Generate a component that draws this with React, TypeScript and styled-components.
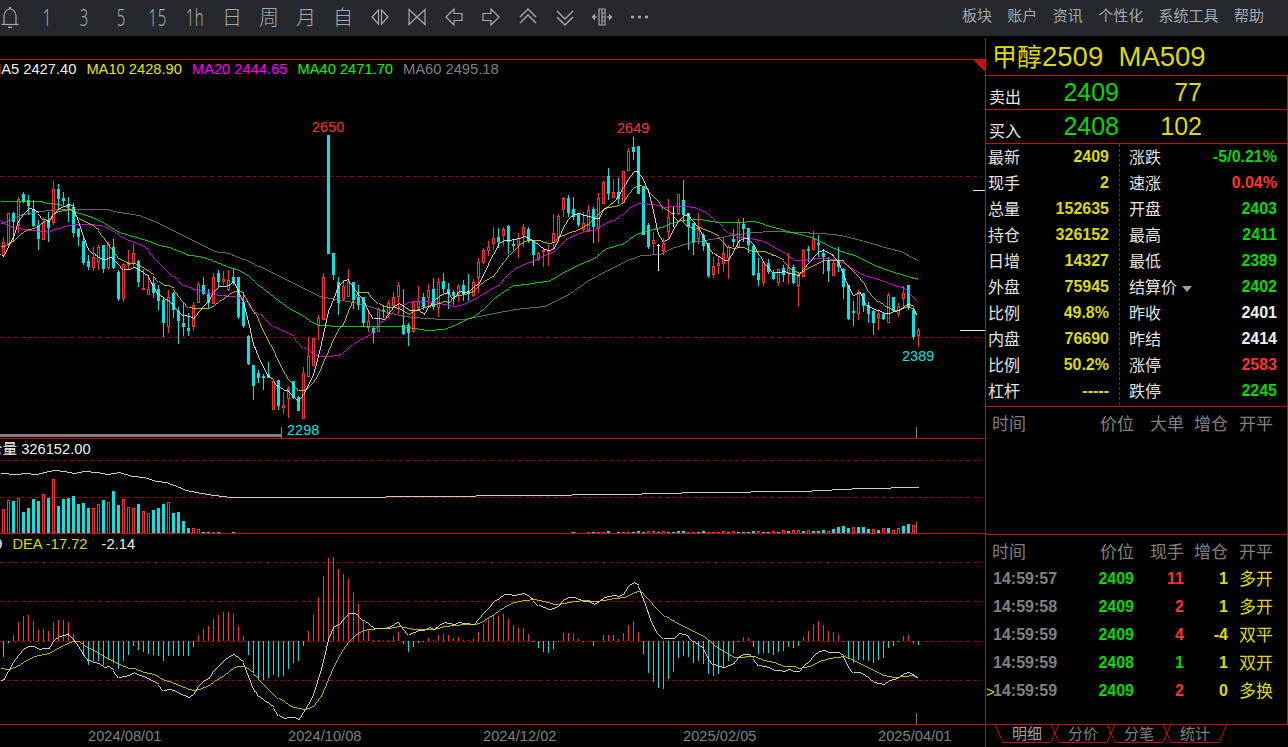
import React from 'react';
import styled, { createGlobalStyle } from 'styled-components';

type P = [number, number];
const FONT = `"Liberation Sans", "Noto Sans CJK SC", sans-serif`;
const RED = '#ff3232', CYAN = '#00e6e6', YEL = '#dcdc00', GRN = '#00dc00', LINE = '#c80f0f', GRAY = '#808080';

const G = createGlobalStyle`
  html, body { margin: 0; padding: 0; background: #000; }
  * { box-sizing: border-box; }
`;
const Page = styled.div`width:1288px;height:747px;overflow:hidden;background:#000;font-family:${FONT};display:flex;flex-direction:column;`;
const Header = styled.header`height:36px;flex:none;background:#25282d;display:flex;align-items:center;justify-content:space-between;padding-right:24px;overflow:hidden;`;
const Tools = styled.div`display:flex;margin-left:-8.5px;`;
const Tool = styled.div`width:37px;height:36px;padding-bottom:2px;display:flex;align-items:center;justify-content:center;color:#a8a8a8;font-family:"Noto Sans CJK SC","Noto Sans",sans-serif;font-weight:300;font-size:20px;line-height:1;svg{display:block;}`;
const Digit = styled.span`display:block;font-family:"Noto Sans",sans-serif;font-weight:300;font-size:24px;letter-spacing:1px;transform:scaleX(.62);white-space:nowrap;`;
const Menu = styled.nav`display:flex;gap:15.4px;color:#a3a8ad;font-size:15px;padding-bottom:7px;`;
const Body = styled.div`flex:1;display:flex;min-height:0;`;
const Charts = styled.main`width:985px;flex:none;display:flex;flex-direction:column;`;
const TopGap = styled.div`height:24px;border-bottom:1px solid ${LINE};flex:none;`;
const Panel = styled.section<{ $h: number }>`position:relative;height:${p => p.$h}px;flex:none;border-bottom:1px solid ${LINE};overflow:hidden;`;
const Plot = styled.svg`position:absolute;left:0;top:0;display:block;shape-rendering:crispEdges;polyline{fill:none;stroke-width:.8;}`;
const Legend = styled.div<{ $ml: number; $mt?: number }>`position:relative;display:flex;gap:10px;margin-left:${p => p.$ml}px;margin-top:${p => p.$mt ?? 0}px;font-size:14.7px;height:18px;line-height:18px;white-space:nowrap;`;
const Item = styled.span<{ $c: string }>`color:${p => p.$c};`;
const Peak = styled.span<{ $x: number; $y: number; $c: string }>`position:absolute;left:${p => p.$x}px;top:${p => p.$y}px;color:${p => p.$c};font-size:14.5px;line-height:16px;`;
const Axis = styled.div`flex:1;display:flex;align-items:center;color:${GRAY};font-size:14.7px;padding-bottom:1px;`;
const DateLabel = styled.span<{ $ml: number }>`margin-left:${p => p.$ml}px;width:76px;white-space:nowrap;`;
const Side = styled.aside`flex:1;margin-top:2px;border-left:1px solid ${LINE};display:flex;flex-direction:column;`;
const Title = styled.div`height:37px;flex:none;color:${YEL};font-size:27.5px;line-height:38px;padding-left:6px;white-space:pre;`;
const TitleCn = styled.span`font-size:25px;`;
const Boxed = styled.div`border-right:1px solid ${LINE};border-bottom:1px solid ${LINE};flex:none;`;
const QuoteRow = styled(Boxed)<{ $first?: boolean }>`height:${p => p.$first ? 35 : 34}px;border-top:${p => p.$first ? `1px solid ${LINE}` : 'none'};display:grid;grid-template-columns:77px 56px 83px;align-items:center;`;
const QLabel = styled.span`color:#e8e8e8;font-size:16px;padding:6px 0 0 3px;`;
const QPrice = styled.span`color:${GRN};font-size:25px;text-align:right;`;
const QVol = styled.span`color:${YEL};font-size:25px;text-align:right;`;
const Quotes = styled(Boxed)`height:263px;display:grid;grid-template-columns:134px 1fr;`;
const QCol = styled.div<{ $right?: boolean }>`padding:0 10px 0 ${p => p.$right ? 9 : 2}px;border-right:${p => p.$right ? 'none' : `1px dashed ${LINE}`};height:261px;`;
const QItem = styled.div`height:26px;display:flex;justify-content:space-between;align-items:center;`;
const QName = styled.span`position:relative;top:-1px;color:#e4e4e4;font-size:16px;white-space:nowrap;`;
const Caret = styled.i`position:absolute;left:100%;margin-left:5px;top:12px;width:0;height:0;border:5.5px solid transparent;border-top:6px solid #a0a0a0;border-bottom:0;`;
const QVal = styled.span<{ $c: string }>`color:${p => p.$c};font-size:16px;font-weight:700;white-space:nowrap;`;
const Ticks = styled(Boxed)<{ $h: number }>`height:${p => p.$h}px;padding:2px 0 0 6px;`;
const TickRow = styled.div<{ $h: number }>`position:relative;height:${p => p.$h}px;display:grid;grid-template-columns:75px 67px 50px 44px 45px;align-items:center;white-space:nowrap;`;
const TH = styled.span<{ $left?: boolean }>`position:relative;top:-1px;color:${GRAY};font-size:17px;text-align:${p => p.$left ? 'left' : 'right'};`;
const TD = styled.span<{ $c: string; $left?: boolean; $normal?: boolean }>`position:relative;top:${p => p.$normal ? -2 : 0}px;color:${p => p.$c};font-size:${p => p.$normal ? 17 : 16}px;font-weight:${p => p.$normal ? 400 : 700};text-align:${p => p.$left ? 'left' : 'right'};padding-left:${p => p.$left ? 1 : 0}px;`;
const Cursor = styled.span`position:absolute;left:-6px;top:50%;transform:translateY(-50%);color:${YEL};font-size:15px;`;
const TabBar = styled.div`flex:1;display:flex;padding-left:13px;`;
const Tab = styled.div<{ $on?: boolean }>`position:relative;width:56px;height:18px;line-height:17px;text-align:center;font-size:15px;color:${p => p.$on ? '#a0a0a0' : GRAY};svg{position:absolute;left:-4px;top:-1px;overflow:visible;}`;

const seg = (ox: number, oy: number, pts: number[][]): P[] => pts.map(([x, y]) => [ox + x / 3, oy + y / 3]);
const mono = (...parts: P[][]): string => {
  let last = -1e9;
  const out: string[] = [];
  parts.flat().forEach(([x, y]) => { if (x > last + 0.01) { out.push(`${Math.floor(x) + .5},${Math.floor(y) + .5}`); last = x; } });
  return out.join(' ');
};

const c5 = [[1,215,255,200,262],[1,130,220,130,230],[0,130,155,125,215],[1,88,162,80,190],[0,72,95,65,100],[0,90,108,75,135],[0,118,168,90,170],[0,165,207,150,240],[1,155,207,140,210],[0,150,175,125,215],[1,58,155,32,165],[0,58,88,42,120],[0,85,92,65,105],[0,103,110,80,155],[0,110,190,100,200],[0,178,202,175,228],[0,212,278,205,285],[0,272,290,255,300],[1,262,290,232,302],[1,232,272,225,300],[0,225,298,225,308],[1,222,290,215,300],[0,232,295,208,298],[0,305,388,300,392],[1,282,385,278,395],[1,275,283,240,298],[1,250,275,222,290],[0,273,335,270,350],[1,355,358,298,360],[1,357,372,315,375],[0,338,368,320,385],[0,358,392,345,420],[0,390,458,385,500],[1,380,468,360,490],[0,370,420,365,445],[0,422,452,410,522],[0,460,470,400,497],[0,475,482,430,498],[1,405,468,395,482],[1,343,397,335,400],[0,345,372,322,375],[0,372,398,358,415],[1,322,400,308,402],[0,308,335,300,350],[1,328,332,302,345],[1,330,358,300,362],[0,322,338,295,345],[0,322,442,320,448],[0,395,468,370,475],[0,497,582,495,585],[0,585,648,585,690],[0,608,625,600,640],[0,618,623,612,660],[0,612,623,575,625],[1,632,718,630,720],[0,630,708,630,720],[1,705,710,665,732],[1,655,685,648,745],[0,633,685,633,688],[0,680,722,678,722],[1,610,745,592,748],[1,558,617,502,620],[1,505,585,503,588],[1,445,465,435,510],[1,322,447,310,450],[0,-105,252,-105,252],[0,250,315,250,330],[0,335,400,322,435]];
const c7 = [[1,527,565,510,570],[1,515,558,478,560],[0,517,570,515,598],[0,560,585,525,600],[0,562,640,560,650],[1,632,652,600,665],[0,655,668,650,698],[1,597,662,595,665],[0,600,605,588,625],[1,580,610,570,625],[1,562,585,545,590],[1,525,558,515,612],[0,645,672,538,675],[0,645,670,640,707],[1,575,662,575,668],[1,572,590,527,600],[0,562,590,550,600],[1,540,562,522,590],[0,538,590,505,600],[1,517,590,505,620],[0,513,537,490,550],[0,538,552,518,598],[0,545,558,540,585],[1,528,548,522,575],[0,525,552,510,572],[0,547,553,492,572],[1,517,555,507,560],[1,457,502,445,550],[1,420,457,415,462],[1,412,420,392,437],[1,385,400,352,420],[0,382,395,355,415],[1,357,375,350,408],[0,348,395,345,432],[0,402,407,388,420],[1,385,403,370,445],[1,352,372,342,412],[0,357,393,350,398],[0,393,435,393,468],[1,430,445,425,452],[1,420,424,415,472],[1,420,424,405,468],[1,370,397,312,420],[1,318,378,312,395],[1,265,298,262,322],[0,265,308,255,322],[0,298,320,262,330],[0,312,345,310,350],[1,338,358,305,365],[1,300,360,285,365],[0,298,350,292,400],[1,265,352,250,395],[1,217,278,213,280],[0,198,252,175,270],[1,247,262,207,265],[0,245,268,205,282],[1,183,275,182,280],[1,123,180,115,182],[0,112,125,82,150],[0,108,252,108,252]];
const c8 = [[0,52,195,52,195],[0,165,232,160,238],[1,210,218,185,252],[2,225,228,222,302],[1,220,240,205,255],[1,142,182,88,205],[2,128,130,110,170],[1,72,130,72,135],[0,90,135,30,150],[0,130,172,128,240],[0,160,215,158,255],[1,180,205,130,222],[0,195,228,190,242],[0,220,317,218,323],[1,288,312,262,325],[1,280,284,258,312],[1,250,278,200,305],[1,232,262,225,327],[0,208,215,178,232],[1,155,228,148,235],[0,162,178,145,215],[0,175,225,175,250],[0,228,315,225,318],[0,310,330,265,347],[1,275,335,272,348],[0,280,305,268,312],[0,308,327,300,330],[1,298,335,296,348],[0,293,315,285,335],[1,290,305,250,342],[0,290,340,285,342],[1,318,345,310,410],[1,240,317,238,320],[0,237,243,228,275],[1,208,238,183,240],[0,220,225,195,262],[0,250,262,238,312],[0,270,303,262,335],[1,278,315,268,317],[0,270,290,230,305],[0,298,350,295,388],[0,345,447,345,450],[0,423,430,392,467],[1,367,430,360,450],[0,370,408,368,425],[0,405,433,395,460],[0,422,458,420,495],[1,432,440,420,480],[0,432,447,425,450],[1,375,455,368,458],[0,382,422,380,425],[1,408,428,398,440],[1,370,385,348,410],[0,345,415,345,420],[0,420,500,415,510],[1,480,494,475,530]];
const candles = [
  ...c5.map(c => [c[0], 170 + c[1] / 3, 170 + c[2] / 3, 170 + c[3] / 3, 170 + c[4] / 3]),
  ...c7.map(c => [c[0], 110 + c[1] / 3, 110 + c[2] / 3, 110 + c[3] / 3, 110 + c[4] / 3]),
  ...c8.map(c => [c[0], 170 + c[1] / 3, 170 + c[2] / 3, 170 + c[3] / 3, 170 + c[4] / 3]),
].map(c => c.map(Math.round));

const ma5 = mono(
  seg(0,170,[[0,250],[10,258],[25,225],[40,200],[55,150],[70,130],[85,115],[100,118],[115,130],[130,148],[145,155],[160,130],[175,115],[190,108],[205,103],[220,110],[235,150],[250,195],[265,235],[280,250],[295,262],[310,270],[325,262],[340,265],[355,280],[370,298],[385,298],[400,293],[415,298],[430,310],[445,318],[460,345],[475,372],[490,385],[505,395],[520,405],[535,420],[550,435],[565,440],[580,445],[595,425],[610,405],[625,390],[640,365],[655,350],[670,350],[685,345],[700,332],[715,360],[730,395],[745,450],[760,520],[775,560],[790,590],[805,620],[820,630],[835,650],[850,660],[865,660],[880,675],[895,690],[910,670],[925,640],[940,610],[955,555],[970,490],[985,420],[1000,385],[1015,345]]),
  seg(340,110,[[10,510],[25,508],[40,530],[55,550],[70,565],[85,600],[100,625],[115,625],[130,628],[145,610],[160,590],[175,580],[190,590],[205,600],[220,602],[235,600],[250,612],[265,590],[280,570],[295,558],[310,550],[325,548],[340,565],[355,545],[370,548],[385,545],[400,530],[415,520],[430,490],[445,460],[460,430],[475,400],[490,390],[505,390],[520,388],[535,385],[550,378],[565,385],[580,395],[595,405],[610,418],[625,420],[640,415],[655,385],[670,350],[685,325],[700,312],[715,310],[730,315],[745,318],[760,325],[775,325],[790,298],[805,285],[820,275],[835,255],[850,230],[865,205],[880,185],[895,183],[910,205],[925,240],[940,300],[955,370]]),
  seg(640,170,[[70,215],[85,205],[100,175],[115,150],[130,135],[145,132],[160,150],[175,170],[190,195],[205,230],[220,250],[235,258],[250,272],[265,272],[280,240],[295,210],[310,205],[325,205],[340,220],[355,250],[370,275],[385,290],[400,308],[415,308],[430,305],[445,310],[460,312],[475,315],[490,295],[505,278],[520,262],[535,245],[550,240],[565,250],[580,255],[595,272],[610,310],[625,345],[640,375],[660,365],[680,405],[700,418],[720,425],[730,430],[745,430],[760,425],[775,420],[790,408],[805,400],[820,412],[833,432]]),
);
const ma10 = mono(
  seg(0,170,[[0,228],[10,230],[25,220],[40,210],[55,195],[70,185],[85,178],[100,175],[115,165],[130,155],[145,148],[160,130],[175,125],[190,122],[205,118],[220,125],[235,145],[250,155],[265,160],[280,170],[295,180],[310,200],[325,220],[340,240],[355,265],[370,275],[385,280],[400,280],[415,285],[430,295],[445,305],[460,315],[475,335],[490,345],[505,345],[520,355],[535,375],[550,395],[565,412],[580,415],[595,415],[610,415],[625,415],[640,405],[655,395],[670,385],[685,372],[700,365],[715,360],[730,370],[745,395],[760,420],[775,445],[790,480],[805,510],[820,535],[835,570],[850,600],[865,625],[880,640],[895,660],[910,660],[925,650],[940,635],[955,610],[970,575],[985,540],[1000,505],[1015,475]]),
  seg(340,110,[[10,640],[25,600],[40,565],[55,548],[70,547],[85,548],[100,565],[115,580],[130,590],[145,592],[160,592],[175,595],[190,605],[205,612],[220,602],[235,597],[250,592],[265,588],[280,582],[295,580],[310,575],[325,578],[340,558],[355,555],[370,552],[385,550],[400,540],[415,525],[430,515],[445,505],[460,495],[475,475],[490,455],[505,435],[520,420],[535,405],[550,395],[565,390],[580,390],[595,392],[610,398],[625,400],[640,398],[655,380],[670,375],[685,368],[700,365],[715,358],[730,350],[745,340],[760,325],[775,310],[790,295],[805,292],[820,290],[835,285],[850,275],[865,250],[880,232],[895,225],[910,228],[925,240],[940,255],[955,270]]),
  seg(640,170,[[70,115],[85,125],[100,135],[115,150],[130,155],[145,170],[160,178],[175,172],[190,178],[205,185],[220,190],[235,198],[250,215],[265,232],[280,235],[295,232],[310,232],[325,240],[340,245],[355,245],[370,245],[385,250],[400,255],[415,262],[430,270],[445,285],[460,300],[475,310],[490,302],[505,292],[520,285],[535,278],[550,272],[565,270],[580,272],[595,270],[610,272],[625,285],[640,302],[655,315],[670,335],[685,360],[700,380],[715,395],[730,405],[745,415],[760,422],[775,420],[790,412],[805,408],[820,420],[833,432]]),
);
const ma20 = mono(
  seg(0,170,[[0,148],[10,160],[25,170],[40,175],[55,175],[70,178],[85,180],[100,182],[115,183],[130,185],[145,187],[160,178],[175,175],[190,170],[205,165],[220,162],[235,163],[265,163],[295,165],[310,170],[325,178],[340,185],[355,195],[370,205],[385,212],[400,218],[415,222],[430,228],[445,240],[460,258],[475,275],[490,290],[505,305],[520,318],[535,330],[550,345],[565,352],[580,357],[595,362],[610,366],[625,370],[640,372],[655,375],[670,375],[685,378],[700,380],[715,385],[730,390],[745,400],[760,420],[775,432],[790,440],[805,455],[820,470],[835,478],[850,485],[865,490],[880,500],[895,518],[910,532],[925,542],[940,552],[955,558],[985,558],[1020,554]]),
  seg(340,110,[[0,730],[25,712],[40,700],[55,690],[70,682],[85,675],[100,660],[115,640],[130,630],[145,615],[160,600],[175,590],[190,582],[205,578],[220,575],[250,575],[280,578],[310,582],[340,588],[355,587],[370,583],[385,575],[400,568],[415,560],[430,550],[445,540],[460,532],[475,525],[490,505],[505,490],[520,478],[535,470],[550,462],[565,457],[580,450],[595,445],[610,437],[625,430],[640,425],[655,410],[670,395],[685,383],[700,375],[715,370],[730,365],[760,360],[775,350],[790,342],[805,335],[820,330],[835,320],[850,310],[865,295],[880,285],[895,280],[940,282],[960,288]]),
  seg(640,170,[[70,112],[100,110],[130,108],[160,112],[175,118],[190,125],[205,135],[220,148],[235,160],[250,172],[265,188],[280,197],[295,203],[325,205],[345,208],[370,215],[385,222],[400,232],[415,240],[430,248],[445,258],[460,270],[475,272],[490,270],[505,268],[520,265],[550,265],[580,268],[610,280],[625,290],[640,302],[655,308],[670,315],[700,325],[730,335],[760,345],[790,355],[805,365],[820,380],[833,392]]),
);
const ma40 = mono(
  seg(0,170,[[0,93],[120,95],[140,100],[175,102],[205,115],[235,130],[265,140],[295,152],[325,170],[355,187],[385,195],[415,205],[445,215],[475,225],[505,232],[535,245],[565,255],[595,260],[625,268],[655,280],[685,292],[715,302],[745,318],[775,345],[805,370],[835,395],[865,415],[895,430],[925,450],[955,465],[1020,468]]),
  seg(340,110,[[0,650],[85,650],[175,650],[220,655],[260,660],[310,657],[340,645],[370,630],[400,620],[430,595],[460,565],[490,545],[520,525],[560,522],[590,518],[620,515],[650,498],[680,480],[710,465],[740,455],[770,440],[800,415],[850,400],[880,375],[910,365],[960,352]]),
  seg(640,170,[[30,175],[60,170],[90,160],[120,150],[175,148],[230,156],[290,157],[340,155],[400,173],[450,187],[490,195],[520,205],[560,225],[600,245],[650,258],[700,285],[750,303],[790,317],[833,328]]),
);
const ma60 = mono(
  seg(0,170,[[0,160],[25,150],[55,135],[85,130],[115,125],[175,118],[235,118],[315,118],[355,128],[415,135],[460,155],[505,175],[550,200],[595,220],[640,243],[685,250],[730,268],[775,290],[820,310],[865,335],[910,355],[955,378],[1020,390]]),
  seg(340,110,[[0,570],[40,578],[85,590],[130,605],[190,618],[250,625],[310,628],[370,628],[430,617],[490,605],[550,595],[610,590],[680,555],[740,515],[800,480],[860,452],[900,437],[955,432]]),
  seg(640,170,[[40,250],[90,235],[150,218],[210,208],[270,197],[330,188],[400,183],[470,187],[540,190],[600,197],[660,210],[720,228],[780,245],[833,270]]),
);
const obv = mono(
  seg(0,430,[[0,130],[50,133],[70,130],[110,132],[130,128],[160,122],[190,125],[220,130],[250,125],[290,126],[320,132],[355,128],[395,138],[430,142],[465,153],[495,156],[520,165],[555,182],[600,190],[640,196],[690,202],[1020,202]]),
  [[520,495.5],[620,494],[700,492.5],[800,491],[860,488],[918,487]],
);
const dif = mono(
  seg(0,430,[[0,750],[10,748],[25,722],[40,695],[55,672],[70,655],[85,648],[100,648],[115,658],[130,655],[145,655],[160,630],[175,620],[190,615],[205,610],[220,625],[235,645],[250,670],[265,690],[280,697],[295,700],[310,712],[325,708],[340,720],[355,742],[370,740],[385,735],[400,727],[415,735],[430,740],[445,748],[460,755],[475,762],[490,780],[505,778],[520,782],[535,790],[550,795],[565,802],[580,790],[595,765],[610,750],[625,745],[640,722],[655,705],[670,690],[685,680],[700,672],[715,685],[730,697],[745,735],[760,775],[775,800],[790,812],[805,820],[820,832],[835,855],[850,865],[865,862],[880,862],[895,868],[910,845],[925,820],[940,790]]),
  seg(320,520,[[0,455],[10,420],[25,355],[40,320],[55,312],[70,295],[85,280],[100,280],[115,285],[130,300],[145,312],[160,325],[190,325],[205,322],[220,312],[235,305],[250,325],[265,343],[280,338],[295,332],[310,332],[325,323],[340,328],[355,315],[370,308],[385,310],[400,313],[415,308],[430,310],[460,312],[475,295],[490,278],[505,262],[520,245],[535,235],[550,223],[565,223],[580,227],[595,224],[610,220],[625,228],[640,240],[655,255],[670,262],[685,268],[700,265],[715,255],[730,238],[745,232],[760,232],[775,238],[790,243],[805,243],[820,252],[835,245],[850,232],[865,230],[880,226],[895,228],[910,220],[925,197],[940,187],[955,197],[970,235]]),
  seg(640,520,[[15,250],[30,295],[50,335],[70,355],[100,355],[115,340],[130,342],[145,350],[160,365],[175,375],[190,385],[205,415],[220,432],[235,438],[250,442],[265,437],[280,430],[295,410],[310,402],[325,402],[340,415],[355,435],[370,438],[385,443],[400,450],[415,452],[430,454],[445,448],[460,453],[475,454],[490,435],[505,425],[520,405],[535,395],[550,392],[565,397],[595,397],[610,410],[625,440],[640,457],[655,457],[670,463],[685,475],[700,488],[715,491],[730,493],[745,482],[760,477],[775,472],[790,460],[805,457],[820,465],[833,475]]),
);
const dea = mono(
  seg(0,430,[[0,715],[25,718],[40,712],[55,705],[70,695],[85,688],[100,680],[115,675],[130,673],[145,670],[160,660],[175,653],[190,645],[205,638],[220,633],[235,635],[250,645],[265,655],[280,662],[295,670],[310,680],[325,688],[340,695],[355,703],[370,710],[385,715],[400,716],[415,722],[430,727],[445,730],[460,733],[475,742],[490,750],[505,755],[520,760],[535,765],[550,772],[565,778],[580,780],[595,778],[610,772],[625,765],[640,755],[655,745],[670,735],[685,725],[700,712],[715,708],[730,708],[745,718],[760,730],[775,745],[790,760],[805,775],[820,790],[835,805],[850,815],[865,825],[880,832],[895,836],[910,838],[925,835],[940,825]]),
  seg(320,520,[[0,528],[10,510],[25,475],[40,440],[55,410],[70,385],[85,365],[100,350],[115,337],[130,332],[145,328],[175,326],[205,324],[235,320],[250,322],[265,325],[280,328],[310,328],[340,327],[370,320],[400,315],[430,313],[460,312],[475,310],[490,302],[505,293],[520,283],[535,272],[550,262],[565,254],[580,248],[595,243],[610,240],[640,238],[670,245],[700,252],[730,250],[760,243],[790,240],[820,244],[850,240],[880,235],[910,232],[925,225],[940,218],[955,214],[970,220]]),
  seg(640,520,[[25,235],[50,262],[75,290],[100,305],[130,318],[160,335],[190,350],[220,375],[250,395],[280,412],[340,408],[370,420],[400,428],[430,438],[460,440],[475,445],[505,438],[535,423],[565,415],[610,408],[640,422],[670,435],[700,452],[730,465],[760,472],[790,468],[815,465],[833,472]]),
);
const hist = [-16,-2,6,19,25,26,20,11,12,10,19,21,21,19,7,0,-15,-24,-20,-20,-24,-19,-22,-28,-20,-14,-5,-9,-11,-13,-14,-15,-20,-15,-15,-15,-15,-15,-6,6,12,15,22,26,29,29,27,15,5,-14,-32,-37,-39,-37,-34,-36,-35,-28,-22,-20,-5,10,26,44,65,83,84,72,67,62,49,37,21,11,1,1,1,1,5,9,-3,-11,-6,-2,-1,3,1,6,7,6,3,4,1,1,2,9,17,21,26,25,27,22,16,13,13,7,-1,-7,-11,-12,-8,-1,8,8,7,2,-1,0,-5,0,6,6,6,2,8,16,20,9,-13,-32,-41,-47,-48,-38,-31,-17,-15,-16,-22,-20,-23,-33,-35,-33,-26,-20,-12,-1,4,3,-6,-13,-12,-12,-14,-11,-10,-6,-7,-5,4,10,17,20,16,10,9,6,-1,-17,-22,-19,-19,-20,-22,-19,-17,-7,-5,-1,5,6,-2,-4];
const volLeft: number[][] = [[1,24],[1,33],[0,32],[1,35],[0,21],[0,25],[0,34],[0,32],[1,39],[0,35],[1,54],[0,27],[0,34],[0,35],[0,37],[0,29],[0,30],[0,25],[1,25],[1,29],[0,33],[1,31],[0,42],[0,28],[1,34],[1,26],[1,25],[0,29],[1,22],[1,20],[0,23],[0,25],[0,29],[1,31],[0,20],[0,21],[0,12],[0,5],[1,5],[1,4],[0,1],[0,1],[1,1],[0,1],[0,0],[0,0],[0,1]];
const volQuiet: number[][] = Array.from({ length: 67 }, () => [0, 0]);
const volMid: number[][] = [[0,1],[0,0],[0,0],[1,1],[0,1],[1,1],[1,1],[0,2],[0,0],[0,1],[1,1],[1,1],[0,1],[0,2]];
const volRight: number[][] = [[0,1],[1,2],[1,2],[0,1],[1,2],[0,1],[0,1],[0,2],[0,2],[1,1],[1,1],[0,1],[0,2],[1,1],[1,1],[1,1],[1,2],[0,1],[1,2],[0,1],[0,1],[0,1],[0,2],[1,2],[0,1],[0,1],[1,2],[0,1],[1,3],[0,2],[1,3],[1,3],[0,2],[1,3],[0,2],[0,2],[0,3],[1,2],[0,4],[0,6],[0,7],[0,5],[1,6],[0,6],[0,6],[0,4],[1,4],[0,3],[1,5],[0,5],[1,3],[1,5],[0,7],[0,9],[1,8]];
const vol = [...volLeft, ...volQuiet, ...volMid, ...volRight].slice(0, 184);

const Dash = ({ y }: { y: number }) => <line x1={0} x2={982} y1={y + .5} y2={y + .5} stroke="#960000" strokeDasharray="4 3" />;
const VTick = ({ x, y1, y2 }: { x: number; y1: number; y2: number }) => <line x1={x + .5} x2={x + .5} y1={y1} y2={y2} stroke={GRAY} />;

const MainChart = () => (
  <Plot width={985} height={378} viewBox="0 60 985 378">
    <Dash y={176} /><Dash y={337} />
    {candles.map((c, i) => {
      const [t, top, bot, wt, wb] = c;
      const x = 5 * i;
      const col = t === 1 ? RED : t === 2 ? '#f0f0f0' : CYAN;
      if (t === 1) return (
        <g key={i} stroke={col} fill="none">
          <line x1={x + 3.5} x2={x + 3.5} y1={wt} y2={top} />
          <line x1={x + 3.5} x2={x + 3.5} y1={bot} y2={wb} />
          <rect x={x + 2.5} y={top + .5} width={2} height={Math.max(bot - top, 1)} />
        </g>
      );
      return (
        <g key={i}>
          <line x1={x + 3.5} x2={x + 3.5} y1={wt} y2={wb} stroke={col} />
          <rect x={x + 2} y={top} width={3} height={Math.max(bot - top, 1)} fill={col} />
        </g>
      );
    })}
    <polyline points={ma60} stroke="#808080" />
    <polyline points={ma40} stroke="#00ff00" />
    <polyline points={ma20} stroke="#ff00ff" />
    <polyline points={ma10} stroke="#e6e600" />
    <polyline points={ma5} stroke="#ffffff" />
    <rect x={0} y={434} width={281} height={3} fill={GRAY} />
    <VTick x={281} y1={427} y2={438} />
    <VTick x={916} y1={427} y2={438} />
    <line x1={973} x2={985} y1={190.5} y2={190.5} stroke="#e8e8e8" />
    <line x1={960} x2={985} y1={330.5} y2={330.5} stroke="#e8e8e8" />
    <polygon points="973,60 985,60 985,72" fill={LINE} />
  </Plot>
);
const VolChart = () => (
  <Plot width={985} height={94} viewBox="0 439 985 94">
    <Dash y={460} /><Dash y={497} />
    {vol.map(([t, h], i) => h === 0 ? null : t === 1
      ? <rect key={i} x={5 * i + 2.5} y={533 - h + .5} width={2} height={h} fill="none" stroke={RED} />
      : <rect key={i} x={5 * i + 2} y={533 - h} width={3} height={h} fill={CYAN} />)}
    <polyline points={obv} stroke="#ffffff" />
    <VTick x={916} y1={522} y2={533} />
  </Plot>
);
const MacdChart = () => (
  <Plot width={985} height={190} viewBox="0 534 985 190">
    <Dash y={562} /><Dash y={601} /><Dash y={641} /><Dash y={680} />
    {hist.map((h, i) => h === 0 ? null : (
      <line key={i} x1={5 * i + 3.5} x2={5 * i + 3.5} y1={641} y2={641 - h} stroke={h > 0 ? RED : CYAN} />
    ))}
    <polyline points={dif} stroke="#ffffff" />
    <polyline points={dea} stroke="#e6e600" />
    <VTick x={916} y1={713} y2={724} />
  </Plot>
);

const Ico = ({ children }: { children: React.ReactNode }) => (
  <svg width={22} height={22} viewBox="0 0 22 22" fill="none" stroke="#a8a8a8" strokeWidth={1.2}>{children}</svg>
);
const tools: React.ReactNode[] = [
  <Ico><path d="M5 18V10.5C5 6 8 3.5 10.5 3V1.5h1V3C14 3.5 17 6 17 10.5V18"/><path d="M2.5 18.5h17"/><path d="M9 21.5h4" strokeWidth={1.6}/></Ico>,
  <Digit>1</Digit>,<Digit>3</Digit>,<Digit>5</Digit>,<Digit>15</Digit>,<Digit>1h</Digit>,'日','周','月','自',
  <Ico><path d="M9.5 4L3 11l6.5 7zM12.5 4L19 11l-6.5 7z"/></Ico>,
  <Ico><path d="M3 3.5L11 11L3 18.5zM19 3.5L11 11L19 18.5z"/></Ico>,
  <Ico><path d="M3 11l8-8v4.5h8v7h-8V19z"/></Ico>,
  <Ico><path d="M19 11l-8-8v4.5H3v7h8V19z"/></Ico>,
  <Ico><path d="M3 11l8-8 8 8M3 17l8-8 8 8" strokeWidth={1.4}/></Ico>,
  <Ico><path d="M3 5l8 8 8-8M3 11l8 8 8-8" strokeWidth={1.4}/></Ico>,
  <Ico><path d="M8 3h6v16H8zM11 3v16M11 7h3M11 11h3M11 15h3"/><path d="M1.5 11H6M1.5 11l2-2v4zM15.5 11H20M20.5 11l-2-2v4z"/></Ico>,
  <Ico><path d="M3 11h3M10 11h3M17 11h3" strokeWidth={2.6}/></Ico>,
];

const leftQ: [string, string][] = [['最新','2409'],['现手','2'],['总量','152635'],['持仓','326152'],['日增','14327'],['外盘','75945'],['比例','49.8%'],['内盘','76690'],['比例','50.2%'],['杠杆','-----']];
const rightQ: [string, string, string][] = [['涨跌','-5/0.21%',GRN],['速涨','0.04%',RED],['开盘','2403',GRN],['最高','2411',GRN],['最低','2389',GRN],['结算价','2402',GRN],['昨收','2401','#f0f0f0'],['昨结','2414','#f0f0f0'],['涨停','2583',RED],['跌停','2245',GRN]];
const trades: [string, string, string, string, string, string][] = [
  ['14:59:57','2409','11',RED,'1','多开'],['14:59:58','2409','2',RED,'1','多开'],['14:59:59','2409','4',RED,'-4','双平'],['14:59:59','2408','1',GRN,'1','双开'],['14:59:59','2409','2',RED,'0','多换'],
];
const TabShape = () => <svg width={64} height={19}><polyline points="0,0 8,18.5 56,18.5 64,0" fill="none" stroke={LINE} /></svg>;

export default function App() {
  return (
    <Page>
      <G />
      <Header>
        <Tools>{tools.map((t, i) => <Tool key={i}>{t}</Tool>)}</Tools>
        <Menu>{['板块','账户','资讯','个性化','系统工具','帮助'].map(m => <span key={m}>{m}</span>)}</Menu>
      </Header>
      <Body>
        <Charts>
          <TopGap />
          <Panel $h={379}>
            <MainChart />
            <Legend $ml={-11}>
              <Item $c="#f0f0f0">MA5 2427.40</Item>
              <Item $c="#e6e600">MA10 2428.90</Item>
              <Item $c="#ff00ff">MA20 2444.65</Item>
              <Item $c="#00ff00">MA40 2471.70</Item>
              <Item $c="#808080">MA60 2495.18</Item>
            </Legend>
            <Peak $x={312} $y={59} $c={RED}>2650</Peak>
            <Peak $x={617} $y={60} $c={RED}>2649</Peak>
            <Peak $x={902} $y={288} $c={CYAN}>2389</Peak>
            <Peak $x={287} $y={362} $c={CYAN}>2298</Peak>
          </Panel>
          <Panel $h={95}>
            <VolChart />
            <Legend $ml={-27} $mt={1}><Item $c="#f0f0f0">持仓量 326152.00</Item></Legend>
          </Panel>
          <Panel $h={191}>
            <MacdChart />
            <Legend $ml={-67} $mt={1}>
              <Item $c="#f0f0f0">DIF -18.79</Item>
              <Item $c="#dcdc00">DEA -17.72</Item>
              <Item $c="#f0f0f0">&nbsp;-2.14</Item>
            </Legend>
          </Panel>
          <Axis>
            <DateLabel $ml={88}>2024/08/01</DateLabel>
            <DateLabel $ml={124}>2024/10/08</DateLabel>
            <DateLabel $ml={119}>2024/12/02</DateLabel>
            <DateLabel $ml={124}>2025/02/05</DateLabel>
            <DateLabel $ml={119}>2025/04/01</DateLabel>
          </Axis>
        </Charts>
        <Side>
          <Title><TitleCn>甲醇</TitleCn>2509  MA509</Title>
          <QuoteRow $first><QLabel>卖出</QLabel><QPrice>2409</QPrice><QVol>77</QVol></QuoteRow>
          <QuoteRow><QLabel>买入</QLabel><QPrice>2408</QPrice><QVol>102</QVol></QuoteRow>
          <Quotes>
            <QCol>{leftQ.map(([k, v], i) => <QItem key={i}><QName>{k}</QName><QVal $c={YEL}>{v}</QVal></QItem>)}</QCol>
            <QCol $right>{rightQ.map(([k, v, c]) => <QItem key={k}><QName>{k}{k === '结算价' && <Caret />}</QName><QVal $c={c}>{v}</QVal></QItem>)}</QCol>
          </Quotes>
          <Ticks $h={128}>
            <TickRow $h={28}><TH $left>时间</TH><TH>价位</TH><TH>大单</TH><TH>增仓</TH><TH>开平</TH></TickRow>
          </Ticks>
          <Ticks $h={190}>
            <TickRow $h={28}><TH $left>时间</TH><TH>价位</TH><TH>现手</TH><TH>增仓</TH><TH>开平</TH></TickRow>
            {trades.map((t, i) => (
              <TickRow key={i} $h={28}>
                {i === 4 && <Cursor>&gt;</Cursor>}
                <TD $c={GRAY} $left>{t[0]}</TD>
                <TD $c={GRN}>{t[1]}</TD>
                <TD $c={t[3]}>{t[2]}</TD>
                <TD $c={YEL}>{t[4]}</TD>
                <TD $c={YEL} $normal>{t[5]}</TD>
              </TickRow>
            ))}
          </Ticks>
          <TabBar>
            {['明细','分价','分笔','统计'].map((t, i) => <Tab key={t} $on={i === 0}><TabShape />{t}</Tab>)}
          </TabBar>
        </Side>
      </Body>
    </Page>
  );
}
